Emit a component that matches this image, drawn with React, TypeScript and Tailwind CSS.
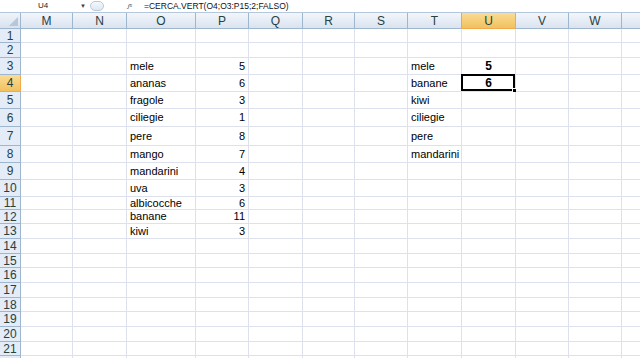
import React from "react";

const cols = ["M", "N", "O", "P", "Q", "R", "S", "T", "U", "V", "W", ""];
const rowHeights = [14, 15, 17, 17, 17, 18, 19, 17, 17, 17, 13, 14, 15, 15, 14, 15, 15, 14, 15, 15, 14, 14];

const listO: Record<number, [string, number]> = {
  3: ["mele", 5],
  4: ["ananas", 6],
  5: ["fragole", 3],
  6: ["ciliegie", 1],
  7: ["pere", 8],
  8: ["mango", 7],
  9: ["mandarini", 4],
  10: ["uva", 3],
  11: ["albicocche", 6],
  12: ["banane", 11],
  13: ["kiwi", 3],
};

const listT: Record<number, string> = {
  3: "mele",
  4: "banane",
  5: "kiwi",
  6: "ciliegie",
  7: "pere",
  8: "mandarini",
};

const listU: Record<number, string> = { 3: "5", 4: "6" };

function FormulaBar() {
  return (
    <div className="flex items-center h-[12px] bg-white text-[8px] leading-none text-black">
      <div className="w-[78px] flex justify-center pl-[8px] text-[#222]">U4</div>
      <div className="w-[10px] flex justify-center text-[6px] text-gray-700">▼</div>
      <div className="ml-[2px] w-[14px] h-[10px] rounded-full border border-[#b9c9da] bg-gradient-to-b from-[#f5f8fc] to-[#dde7f2]" />
      <div className="w-[36px] flex justify-end pr-[8px] italic font-serif text-[7px] text-gray-600">f<span className="text-[5px]">x</span></div>
      <div className="pl-[4px] text-[8.5px] text-[#111]">=CERCA.VERT(O4;O3:P15;2;FALSO)</div>
    </div>
  );
}

export default function App() {
  const gridRows = "grid-rows-[16px_14px_15px_17px_17px_17px_18px_19px_17px_17px_17px_13px_14px_15px_15px_14px_15px_15px_14px_15px_15px_14px_14px]";
  return (
    <div className="w-[640px] h-[358px] overflow-hidden bg-white font-['Liberation_Sans',Arial,sans-serif]">
      <FormulaBar />
      <div className="h-[1px] bg-[#b5c7dd]" />
      <div className={`grid grid-cols-[21px_52px_54px_69px_53px_54px_52px_53px_54px_54px_53px_53px_60px] ${gridRows}`}>
        {/* select-all corner */}
        <div className="relative border-r border-b border-[#9eb6ce] bg-gradient-to-b from-[#f0f4f9] to-[#d7e2ef]">
          <div className="absolute right-[2px] bottom-[2px] w-0 h-0 border-l-[9px] border-l-transparent border-b-[9px] border-b-[#b7c6d8]" />
        </div>
        {cols.map((c, i) => (
          <div
            key={"h" + i}
            className={
              c === "U"
                ? "flex items-center justify-center border-r border-b border-[#f2a94b] bg-gradient-to-b from-[#f9dc93] to-[#f1c15f] text-[12px] text-[#27413e]"
                : "flex items-center justify-center border-r border-b border-[#9eb6ce] bg-gradient-to-b from-[#f3f6fb] to-[#dae3ef] text-[12px] text-[#27413e]"
            }
          >
            {c}
          </div>
        ))}
        {rowHeights.map((_, ri) => {
          const r = ri + 1;
          return (
            <React.Fragment key={"r" + r}>
              <div
                className={
                  r === 4
                    ? "flex items-center justify-center border-r border-b border-[#f2a94b] bg-gradient-to-b from-[#f9dc93] to-[#f1c15f] text-[12px] text-[#27413e]"
                    : "flex items-center justify-center border-r border-b border-[#9eb6ce] bg-[#e4ecf7] text-[12px] text-[#27413e]"
                }
              >
                {r <= 21 ? r : null}
              </div>
              {cols.map((c, ci) => {
                let content: React.ReactNode = null;
                let cls = "relative flex items-center border-r border-b border-[#dde1ee] text-[11px] text-black whitespace-nowrap";
                if (c === "O" && listO[r]) {
                  content = listO[r][0];
                  cls += " pl-[3px]";
                } else if (c === "P" && listO[r]) {
                  content = listO[r][1];
                  cls += " justify-end pr-[3px]";
                } else if (c === "T" && listT[r]) {
                  content = listT[r];
                  cls += " pl-[3px]";
                } else if (c === "U" && listU[r]) {
                  content = listU[r];
                  cls += " justify-center font-bold text-[12px]";
                }
                return (
                  <div key={"c" + r + "-" + ci} className={cls}>
                    {content}
                    {c === "U" && r === 4 && (
                      <div className="absolute left-[-1px] top-[-1px] right-0 bottom-0 border-2 border-black">
                        <div className="absolute right-[-4px] bottom-[-4px] w-[5px] h-[5px] bg-black border border-white" />
                      </div>
                    )}
                  </div>
                );
              })}
            </React.Fragment>
          );
        })}
      </div>
    </div>
  );
}
